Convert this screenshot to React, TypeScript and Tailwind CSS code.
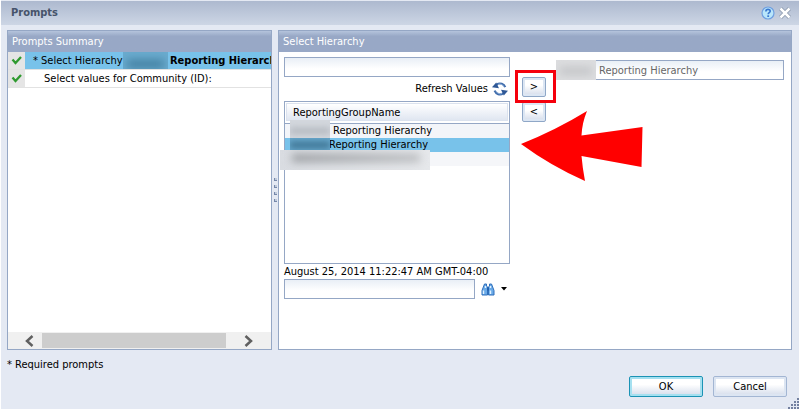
import React from "react";

function Check() {
  return (
    <svg width="12" height="12" viewBox="0 0 12 12" fill="none" aria-hidden="true">
      <path d="M1.500 4.500 4.500 8 10 2" stroke="#2f9a2f" strokeWidth="2.300" />
    </svg>
  );
}

function HelpIcon() {
  return (
    <svg width="14" height="14" viewBox="0 0 14 14" aria-hidden="true">
      <circle cx="7" cy="7" r="6" fill="#b9e6fb" stroke="#6f9fe0" strokeWidth="1.200" />
      <path d="M4.900 5.400c0-1.400.9-2 2.100-2s2.200.7 2.200 1.800c0 1.400-2 1.500-2 3" fill="none" stroke="#3a78d0" strokeWidth="1.600" />
      <rect x="6.300" y="9.300" width="1.800" height="1.700" fill="#3a78d0" />
    </svg>
  );
}

function CloseIcon() {
  return (
    <svg width="12" height="12" viewBox="0 0 12 12" aria-hidden="true">
      <path d="M1.500 1.500 10.500 10.500M10.500 1.500 1.500 10.500" stroke="#8592a8" strokeWidth="4" />
      <path d="M1.500 1.500 10.500 10.500M10.500 1.500 1.500 10.500" stroke="#fff" strokeWidth="2.600" />
    </svg>
  );
}

function RefreshIcon() {
  return (
    <svg width="16" height="14" viewBox="0 0 16 14" aria-hidden="true">
      <path d="M13.200 5.200C12 2 8 .3 4.800 2.500" fill="none" stroke="#3f6cab" strokeWidth="2.200" />
      <path d="M0 5.200 4.200.6 7 6.200Z" fill="#2f5896" />
      <path d="M2.600 8.600C4 12 8 13.600 11.200 11.400" fill="none" stroke="#3f6cab" strokeWidth="2.200" />
      <path d="M16 8.800 11.800 13.400 9 7.800Z" fill="#2f5896" />
      <path d="M11.800 4.400C10.600 2.400 8 1.500 6 2.400M4.200 9.500C5.400 11.500 8 12.400 10 11.500" fill="none" stroke="#a5c0e4" strokeWidth=".8" />
    </svg>
  );
}

function Binoculars() {
  return (
    <svg width="14" height="13" viewBox="0 0 14 13" aria-hidden="true">
      <path d="M3.500 1h2v2l1 1v8H1V7.500ZM8.500 1h2L13 7.500V12H7.500V4l1-1Z" fill="#6aaae8" stroke="#2f6fbb" />
      <path d="M6 4.500h2v3H6Z" fill="#2260ae" />
      <path d="M2.500 7.500V11M9.500 7.500V11M4.500 3v2M9.500 3v2" stroke="#e2f2ff" strokeWidth="1.400" />
    </svg>
  );
}

function PanelTitle({ children }: { children: React.ReactNode }) {
  return (
    <h2 className="h-[21px] shrink-0 bg-linear-to-b from-[#b5c4dc] via-[#98a8c6] via-25% to-[#98a8c6] px-1 text-[11px] leading-[21px] text-white">
      {children}
    </h2>
  );
}

const field =
  "h-5 min-w-0 border border-[#95a7c5] bg-linear-to-b from-[#e9eff6] to-white to-60% px-1 text-[11px] text-[#666] outline-none";
const move =
  "h-5 w-6 rounded-[2px] border border-[#8fa7c7] bg-linear-to-b from-white from-40% to-[#d3dbea] text-[11px] leading-[18px] shadow-[inset_0_0_0_2px_#dce6f3]";
const action =
  "h-[21px] w-[74px] rounded-[2px] border bg-linear-to-b from-white from-40% to-[#d3dbea] text-[11px] leading-[19px]";

export default function App() {
  return (
    <div className="relative flex h-screen flex-col overflow-hidden border-l border-white bg-[#e4e9f3] font-['DejaVu_Sans_Condensed','Noto_Sans',sans-serif] text-[11px] leading-[14px] text-black">
      <header className="flex h-[25px] shrink-0 items-center justify-between border-t border-[#e4e9f3] bg-linear-to-b from-[#adb9cf] to-[#cdd6e5] pr-2 pl-[10px]">
        <h1 className="text-[11px] font-bold text-[#46536a]">Prompts</h1>
        <div className="flex items-center gap-1">
          <button aria-label="Help"><HelpIcon /></button>
          <button aria-label="Close"><CloseIcon /></button>
        </div>
      </header>

      <main className="flex min-h-0 flex-1 pt-[5px] pr-[7px] pl-[6px]">
        <section className="flex w-[265px] shrink-0 flex-col border border-[#95a7c5] bg-white">
          <PanelTitle>Prompts Summary</PanelTitle>
          <ul className="min-h-0 flex-1 overflow-hidden">
            <li className="flex h-[18px] border-b border-[#e2e2e2]">
              <span className="flex w-[17px] shrink-0 items-center justify-center bg-[#e5e5e5]"><Check /></span>
              <span className="flex flex-1 items-center overflow-hidden bg-[#78c2ea] pl-2 whitespace-nowrap">
                <span className="w-[90px] shrink-0">* Select Hierarchy</span>
                <span className="relative h-[18px] w-[45px] shrink-0 overflow-hidden bg-[#6aabce]">
                  <span className="absolute inset-x-1 top-2 h-2 bg-[#3f7d9e] blur-[4px]" />
                </span>
                <b className="pl-0.5">Reporting Hierarchy</b>
              </span>
            </li>
            <li className="flex h-[18px] border-b border-[#e2e2e2]">
              <span className="flex w-[17px] shrink-0 items-center justify-center bg-[#e5e5e5]"><Check /></span>
              <span className="flex items-center pl-[19px] whitespace-nowrap">Select values for Community (ID):</span>
            </li>
          </ul>
          <div className="flex h-[17px] items-center bg-[#f0f0f0]">
            <button aria-label="Scroll left" className="flex w-[34px] justify-center pl-2">
              <svg width="10" height="12" viewBox="0 0 10 12"><path d="M8.500 1 3 6l5.500 5" fill="none" stroke="#606060" strokeWidth="2.500" /></svg>
            </button>
            <div className="h-[15px] flex-1 bg-[#cdcdcd]" />
            <button aria-label="Scroll right" className="flex w-[45px] justify-center">
              <svg width="10" height="12" viewBox="0 0 10 12"><path d="M1.500 1 7 6l-5.500 5" fill="none" stroke="#606060" strokeWidth="2.500" /></svg>
            </button>
          </div>
        </section>

        <div className="flex w-[6px] shrink-0 flex-col items-center justify-center gap-1">
          {[0, 1, 2, 3].map((n) => (
            <span key={n} className="h-[3px] w-[3px] border-b border-l border-[#7688aa] bg-[#c0cbdc]" />
          ))}
        </div>

        <section className="flex min-w-0 flex-1 flex-col border border-[#95a7c5] bg-white">
          <PanelTitle>Select Hierarchy</PanelTitle>
          <div className="flex pt-[5px] pr-[7px] pl-[5px]">
            <div className="flex w-[226px] shrink-0 flex-col">
              <input aria-label="Value" className={field} />
              <button className="flex h-6 items-center justify-end gap-1 pr-0.5">
                Refresh Values <RefreshIcon />
              </button>
              <div className="relative h-[163px] border border-[#95a7c5]">
                <table className="w-full border-collapse">
                  <thead>
                    <tr>
                      <th className="h-[21px] border-b border-[#95a7c5] p-px text-left font-normal">
                        <div className="h-[18px] border border-[#dbe2ee] bg-linear-to-b from-white to-[#e0e6f1] px-1.5 leading-[18px]">ReportingGroupName</div>
                      </th>
                    </tr>
                  </thead>
                  <tbody>
                    <tr className="h-[14px] bg-[#f3f5f9]"><td className="py-0 pl-12">Reporting Hierarchy</td></tr>
                    <tr className="h-[14px] bg-[#78c2ea]"><td className="py-0 pl-11">Reporting Hierarchy</td></tr>
                    <tr className="h-[14px] bg-[#f5f6f9]"><td className="p-0" /></tr>
                  </tbody>
                </table>
                <div className="absolute top-[18px] left-[5px] h-[18px] w-10 overflow-hidden bg-[#d3d7dd]">
                  <div className="absolute inset-x-0 top-2 h-1.5 bg-[#b2b7be] blur-[3px]" />
                </div>
                <div className="absolute top-[36px] left-[5px] h-[14px] w-10 overflow-hidden bg-[#68a8cc]">
                  <div className="absolute inset-x-0 top-1 h-1.5 bg-[#3a6f8e] blur-[3px]" />
                </div>
                <div className="absolute top-[48px] -left-[5px] h-5 w-[150px] overflow-hidden bg-linear-to-r from-[#d9dce1] to-[#e6e8eb]">
                  <div className="absolute top-1 left-3 h-2 w-32 bg-linear-to-r from-[#999ca0] to-[#b9bbbe] blur-[4px]" />
                </div>
              </div>
              <span className="h-[15px] leading-[15px]">August 25, 2014 11:22:47 AM GMT-04:00</span>
              <div className="flex items-center">
                <input aria-label="Search" className={`${field} w-[191px]`} />
                <button aria-label="Find" className="ml-1.5"><Binoculars /></button>
                <button aria-label="Search options" className="ml-1.5">
                  <svg width="6" height="4" viewBox="0 0 6 4"><path d="M0 0h6L3 3.500Z" /></svg>
                </button>
              </div>
            </div>

            <div className="relative ml-3 flex w-6 shrink-0 flex-col gap-[5px] pt-5">
              <button className={move}>&gt;</button>
              <button className={move}>&lt;</button>
              <div className="pointer-events-none absolute top-[13px] -left-[7px] h-[33px] w-[41px] border-[3px] border-[#f5000c]" />
              <svg className="pointer-events-none absolute top-[53px] -left-px" width="124" height="72" viewBox="0 0 124 72" aria-hidden="true">
                <path d="M0 34Q35 20 66 1Q61 13 60.500 25.500L121.500 17 120.500 57 60.500 46Q61.500 58 64 71Q30 56 0 34Z" fill="#f00" />
              </svg>
            </div>

            <div className="relative ml-[10px] flex min-w-0 flex-1 pt-[3px]">
              <input aria-label="Selected value" readOnly defaultValue="Reporting Hierarchy" className={`${field} flex-1 pl-[42px]`} />
              <div className="absolute top-[3px] left-0 h-5 w-10 overflow-hidden bg-[#dcdddf]">
                <div className="absolute inset-x-1 top-2 h-1.5 bg-[#bcbec1] blur-[4px]" />
              </div>
            </div>
          </div>
        </section>
      </main>

      <footer className="h-[59px] shrink-0 pr-3 pl-1.5">
        <p className="pt-2">* Required prompts</p>
        <div className="flex justify-end gap-[10px] pt-1">
          <button className={`${action} border-[#1b93b5] shadow-[inset_0_0_0_2px_#a5e0f0]`}>OK</button>
          <button className={`${action} border-[#a3b6d3] shadow-[inset_0_0_0_2px_#dce5f2]`}>Cancel</button>
        </div>
      </footer>
      <svg className="absolute right-0 bottom-0" width="11" height="11" viewBox="0 0 11 11" aria-hidden="true">
        <path d="M9 0h2v2H9ZM6 3h2v2H6ZM9 3h2v2H9ZM3 6h2v2H3ZM6 6h2v2H6ZM9 6h2v2H9ZM0 9h2v2H0ZM3 9h2v2H3ZM6 9h2v2H6ZM9 9h2v2H9Z" fill="#73809f" />
      </svg>
    </div>
  );
}
